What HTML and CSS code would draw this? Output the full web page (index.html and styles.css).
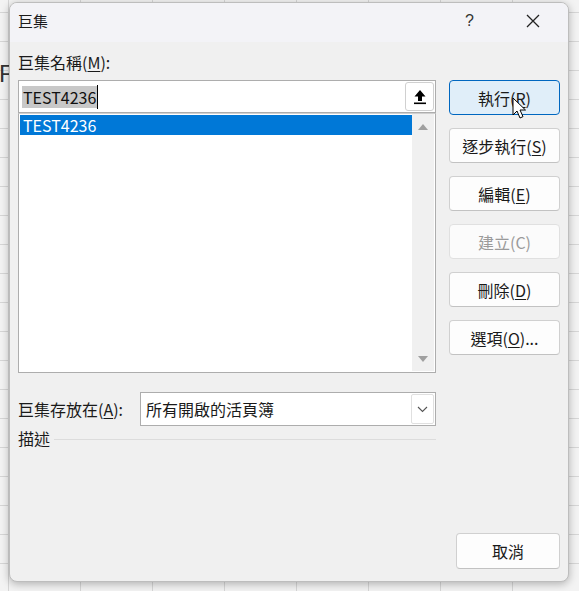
FILE: index.html
```html
<!DOCTYPE html>
<html lang="zh-Hant">
<head>
<meta charset="utf-8">
<link rel="stylesheet" href="styles.css">
</head>
<body>
<div class="backdrop">
  <span class="bg-letter">F</span>
</div>
<div class="dialog">
  <div class="titlebar">
    <span class="title">巨集</span>
    <span class="help">?</span>
    <svg class="close" width="14" height="14" viewBox="0 0 14 14"><path d="M1 1L13 13M13 1L1 13" stroke="#222" stroke-width="1.3" fill="none"/></svg>
  </div>
  <div class="content">
    <div class="left">
      <div class="label">巨集名稱(<u>M</u>):</div>
      <div class="namebox">
        <span class="nametext"><span class="sel">TEST4236</span><span class="caret"></span></span>
        <div class="upbtn">
          <svg width="14" height="16" viewBox="0 0 14 16"><path d="M7 1L1.5 7.5H5V12H9V7.5H12.5Z" fill="#000"/><rect x="1" y="13.5" width="12" height="1.6" fill="#000"/></svg>
        </div>
      </div>
      <div class="list">
        <div class="items">
          <div class="item selected">TEST4236</div>
        </div>
        <div class="scroll">
          <svg width="12" height="8" viewBox="0 0 12 8"><path d="M6 1L11 7H1Z" fill="#a0a0a0"/></svg>
          <svg width="12" height="8" viewBox="0 0 12 8"><path d="M6 7L11 1H1Z" fill="#a0a0a0"/></svg>
        </div>
      </div>
      <div class="combo-row">
        <span class="label">巨集存放在(<u>A</u>):</span>
        <div class="combo">
          <span class="combo-text">所有開啟的活頁簿</span>
          <div class="combo-btn">
            <svg width="11" height="7" viewBox="0 0 11 7"><path d="M1 1L5.5 5.5L10 1" stroke="#555" stroke-width="1.1" fill="none"/></svg>
          </div>
        </div>
      </div>
      <div class="desc">
        <span class="label">描述</span>
        <span class="rule"></span>
      </div>
    </div>
    <div class="buttons">
      <button class="btn default">執行(<u>R</u>)</button>
      <button class="btn">逐步執行(<u>S</u>)</button>
      <button class="btn">編輯(<u>E</u>)</button>
      <button class="btn disabled">建立(C)</button>
      <button class="btn">刪除(<u>D</u>)</button>
      <button class="btn">選項(<u>O</u>)...</button>
    </div>
  </div>
  <div class="footer">
    <button class="btn cancel">取消</button>
  </div>
</div>
<svg class="cursor" width="16" height="24" viewBox="0 0 16 24"><path d="M1 1V18L5 14L8 21L11 19.6L8 13H13.5Z" fill="#fff" stroke="#000" stroke-width="1"/></svg>
</body>
</html>
```
FILE: styles.css
```css
html, body {
  margin: 0;
  padding: 0;
}
body {
  width: 579px;
  height: 591px;
  overflow: hidden;
  position: relative;
  background-color: #f3f3f3;
  background-image:
    linear-gradient(to bottom, #d6d6d6 1px, transparent 1px),
    linear-gradient(to right, #d6d6d6 1px, transparent 1px);
  background-size: 100% 29px, 72px 100%;
  background-position: 0 12px, 8px 0;
  font-family: "Noto Sans CJK TC", "Noto Sans", sans-serif;
  color: #1a1a1a;
  font-size: 16px;
}
.backdrop {
  position: absolute;
  inset: 0;
}
.bg-letter {
  position: absolute;
  left: -1px;
  top: 60px;
  font-family: "Liberation Sans", sans-serif;
  font-size: 24px;
  color: #333;
}
.dialog {
  position: absolute;
  left: 9px;
  top: 2px;
  width: 560px;
  height: 580px;
  background: #f0f0f0;
  border: 1px solid #bdbdbd;
  border-radius: 8px;
  box-sizing: border-box;
  box-shadow: 0 2px 8px rgba(0,0,0,0.28);
  display: flex;
  flex-direction: column;
  overflow: hidden;
}
.titlebar {
  height: 39px;
  flex: none;
  background: #f3f3f7;
  display: flex;
  align-items: center;
  padding: 0 0 0 8px;
  position: relative;
}
.title {
  font-size: 15px;
  flex: 1;
  margin-top: -4px;
}
.help {
  font-family: "Liberation Sans", sans-serif;
  font-size: 16px;
  color: #333;
  margin-right: 52px;
  margin-top: -4px;
}
.close {
  margin-right: 28px;
  margin-top: -4px;
}
.content {
  display: flex;
  padding: 10px 0 0 8px;
  gap: 13px;
}
.left {
  width: 418px;
  display: flex;
  flex-direction: column;
}
.label {
  font-size: 16px;
  line-height: 20px;
  white-space: nowrap;
}
u {
  text-decoration-thickness: 1px;
  text-underline-offset: 2px;
}
.namebox {
  margin-top: 8px;
  height: 33px;
  box-sizing: border-box;
  border: 1px solid #adadad;
  background: #fff;
  display: flex;
  align-items: center;
  padding: 0 1px 0 3px;
}
.nametext {
  flex: 1;
  display: flex;
  align-items: center;
}
.sel {
  background: #c8c8c8;
  color: #111;
  font-size: 16px;
  line-height: 22px;
  padding: 0 1px;
}
.caret {
  width: 1px;
  height: 24px;
  background: #000;
}
.upbtn {
  width: 29px;
  height: 29px;
  box-sizing: border-box;
  border: 1px solid #d0d0d0;
  border-radius: 3px;
  background: #fff;
  display: flex;
  align-items: center;
  justify-content: center;
}
.list {
  height: 260px;
  box-sizing: border-box;
  border: 1px solid #adadad;
  border-top: 1px solid #d0d0d0;
  background: #fff;
  display: flex;
  padding: 0 1px 1px 1px;
}
.items {
  flex: 1;
}
.item {
  height: 20px;
  line-height: 20px;
  font-size: 16px;
  padding-left: 3px;
}
.item.selected {
  background: #0078d7;
  color: #fff;
  margin-top: 1px;
}
.scroll {
  width: 22px;
  background: #f0f0f0;
  display: flex;
  flex-direction: column;
  justify-content: space-between;
  align-items: center;
  padding: 9px 0 8px;
}
.combo-row {
  display: flex;
  align-items: center;
  margin-top: 19px;
  gap: 17px;
}
.combo {
  flex: 1;
  height: 34px;
  box-sizing: border-box;
  border: 1px solid #adadad;
  background: #fff;
  display: flex;
  align-items: center;
  padding: 0 1px 0 5px;
}
.combo-text {
  flex: 1;
  font-size: 16px;
}
.combo-btn {
  width: 23px;
  height: 30px;
  box-sizing: border-box;
  border: 1px solid #e0e0e0;
  border-radius: 2px;
  display: flex;
  align-items: center;
  justify-content: center;
}
.desc {
  display: flex;
  align-items: center;
  margin-top: 2px;
  gap: 4px;
}
.rule {
  flex: 1;
  height: 1px;
  background: #dcdcdc;
  margin-top: 2px;
}
.buttons {
  display: flex;
  flex-direction: column;
  gap: 13px;
  padding-top: 28px;
}
.btn {
  width: 111px;
  height: 35px;
  box-sizing: border-box;
  border: 1px solid #d0d0d0;
  border-bottom-color: #c2c2c2;
  border-radius: 4px;
  background: #fdfdfd;
  font-family: "Noto Sans CJK TC", "Noto Sans", sans-serif;
  font-size: 16px;
  color: #1a1a1a;
  padding: 0;
}
.btn.default {
  background: #e0eef9;
  border: 1px solid #0067c0;
}
.btn.disabled {
  color: #9a9a9a;
  background: #fbfbfb;
  border-color: #e0e0e0;
}
.footer {
  margin-top: auto;
  display: flex;
  justify-content: flex-end;
  padding: 0 8px 12px 0;
}
.btn.cancel {
  width: 104px;
  height: 36px;
}
.cursor {
  position: absolute;
  left: 512px;
  top: 97px;
}
```
